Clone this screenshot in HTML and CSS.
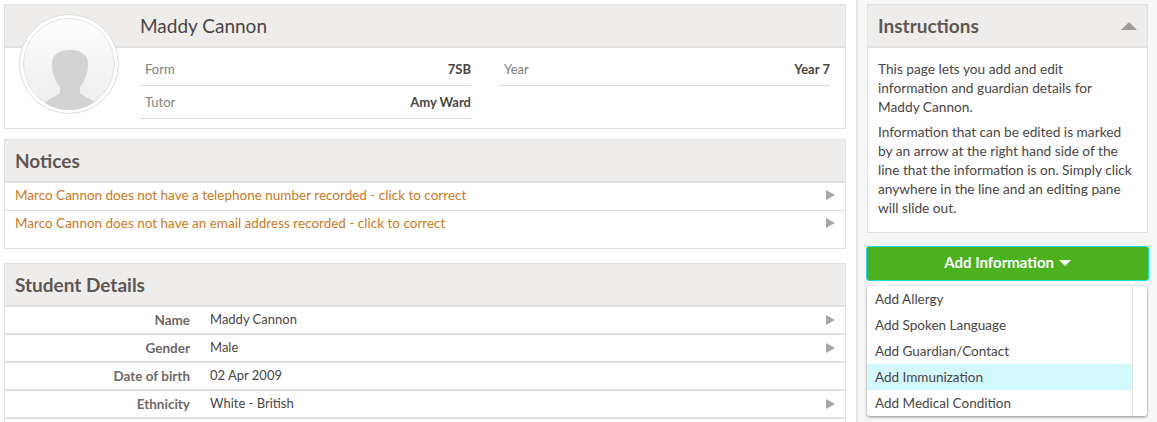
FILE: index.html
```html
<!DOCTYPE html>
<html lang="en">
<head>
    <meta charset="UTF-8">
    <meta name="viewport" content="width=device-width, initial-scale=1.0">
    <title>Maddy Cannon - Student Details</title>
    <link rel="stylesheet" href="styles.css">
</head>
<body>
    <div class="page">
        <div class="main">
            <div class="panel profile">
                <div class="avatar">
                    <svg viewBox="0 0 92 92" width="92" height="92">
                        <defs>
                            <linearGradient id="avatarBg" x1="0" y1="0" x2="0" y2="1">
                                <stop offset="0" stop-color="#fdfdfd"/>
                                <stop offset="1" stop-color="#ececec"/>
                            </linearGradient>
                        </defs>
                        <circle cx="46" cy="46" r="45.5" fill="url(#avatarBg)" stroke="#e2e2e2"/>
                        <path d="M47 32c-10 0-18 4-18 14 0 6 1 10 3 14 1 4 3 7 5 9v6c-3 3-8 5-10 6-4 2-7 5-8 11h56c-1-6-4-9-8-11-2-1-7-3-10-6v-6c2-2 4-5 5-9 2-4 3-8 3-14 0-10-8-14-18-14z" fill="#d2d2d2"/>
                    </svg>
                </div>
                <div class="profile-head">
                    <h1>Maddy Cannon</h1>
                </div>
                <div class="profile-info">
                    <div class="info-row"><span class="info-label">Form</span><span class="info-value">7SB</span></div>
                    <div class="info-row"><span class="info-label">Year</span><span class="info-value">Year 7</span></div>
                    <div class="info-row"><span class="info-label">Tutor</span><span class="info-value">Amy Ward</span></div>
                </div>
            </div>

            <div class="panel notices">
                <div class="panel-head"><h2>Notices</h2></div>
                <div class="notice-row"><span>Marco Cannon does not have a telephone number recorded - click to correct</span><i class="arrow"></i></div>
                <div class="notice-row notice-last"><span>Marco Cannon does not have an email address recorded - click to correct</span><i class="arrow"></i></div>
            </div>

            <div class="panel details">
                <div class="panel-head"><h2>Student Details</h2></div>
                <div class="detail-row"><span class="detail-label">Name</span><span class="detail-value">Maddy Cannon</span><i class="arrow"></i></div>
                <div class="detail-row"><span class="detail-label">Gender</span><span class="detail-value">Male</span><i class="arrow"></i></div>
                <div class="detail-row"><span class="detail-label">Date of birth</span><span class="detail-value">02 Apr 2009</span></div>
                <div class="detail-row"><span class="detail-label">Ethnicity</span><span class="detail-value">White - British</span><i class="arrow"></i></div>
            </div>
        </div>

        <div class="side">
            <div class="panel instructions">
                <div class="panel-head instructions-head">
                    <h2>Instructions</h2>
                    <i class="caret-up"></i>
                </div>
                <div class="instructions-body">
                    <p class="intro">This page lets you add and edit information and guardian details for Maddy Cannon.</p>
                    <p>Information that can be edited is marked by an arrow at the right hand side of the line that the information is on. Simply click anywhere in the line and an editing pane will slide out.</p>
                </div>
            </div>

            <button class="add-btn">Add Information <i class="caret-down"></i></button>
            <div class="menu">
                <ul>
                    <li>Add Allergy</li>
                    <li>Add Spoken Language</li>
                    <li>Add Guardian/Contact</li>
                    <li class="active">Add Immunization</li>
                    <li>Add Medical Condition</li>
                </ul>
                <div class="menu-track"></div>
            </div>
        </div>
    </div>
</body>
</html>
```

FILE: styles.css
```css
* { box-sizing: border-box; }
html, body { margin: 0; height: 422px; overflow: hidden; }
body { font-family: "Lato", "Noto Sans", sans-serif; font-size: 13px; color: #4a4543; background: #fff; }

.page { display: flex; height: 422px; }
.main { width: 856px; padding: 4px 10px 0 4px; flex-shrink: 0; }
.side { flex: 1; padding: 4px 8px 0 9px; background: #f7f7f7; border-left: 2px solid #e4e2e1; position: relative; }

.panel { border: 1px solid #e2e0df; background: #fff; }
.panel-head { height: 43px; background: #eeedeb; border-bottom: 2px solid #e2e0df; padding: 0 10px; display: flex; align-items: center; }
h2 { margin: 0; font-size: 19px; font-weight: 700; color: #5e5753; }

.profile { height: 125px; position: relative; }
.profile-head { height: 43px; background: #eeedeb; border-bottom: 2px solid #e2e0df; padding-left: 135px; display: flex; align-items: center; }
h1 { margin: 0; font-size: 19px; font-weight: 400; color: #4a4543; }
.avatar { position: absolute; left: 14px; top: 9px; width: 100px; height: 100px; padding: 3px; border-radius: 50%; background: #fff; border: 1px solid #dedcdb; z-index: 1; }
.avatar svg { display: block; border-radius: 50%; }

.profile-info { display: grid; grid-template-columns: 331px 331px; column-gap: 28px; padding: 5px 0 0 135px; }
.info-row { height: 33px; display: flex; justify-content: space-between; align-items: center; border-bottom: 1px solid #dedcdb; padding-left: 5px; }
.info-label { color: #85807c; }
.info-value { font-weight: 700; color: #4a4543; }

.notices { height: 110px; margin-top: 10px; }
.notice-row { height: 28px; display: flex; justify-content: space-between; align-items: center; padding: 0 10px 3px 10px; font-size: 13.5px; color: #cc7a1c; border-bottom: 1px solid #e2e0df; }
.notice-last { border-bottom: 0; padding-bottom: 4px; }

.details { margin-top: 14px; height: 159px; border-bottom: 0; }
.detail-row { height: 28px; display: flex; align-items: center; padding: 0 10px 0 0; border-bottom: 2px solid #e2e0df; }
.detail-label { width: 185px; text-align: right; font-size: 13.5px; font-weight: 700; color: #6f6864; }
.detail-value { margin-left: 20px; flex: 1; padding-bottom: 2px; }

.arrow { width: 0; height: 0; border-style: solid; border-width: 5px 0 5px 9px; border-color: transparent transparent transparent #aaa6a4; flex-shrink: 0; }

.instructions { width: 281px; height: 229px; }
.instructions-head { justify-content: space-between; padding-right: 10px; }
.caret-up { width: 0; height: 0; border-style: solid; border-width: 0 8px 8px 8px; border-color: transparent transparent #a09a97 transparent; }
.instructions-body { padding: 11px 10px 0 10px; font-size: 13.7px; line-height: 19px; }
.instructions-body p { margin: 0 0 6px 0; }
.instructions-body .intro { padding-right: 10px; }

.add-btn { display: block; width: 283px; height: 35px; margin: 13px 0 0 -1px; background: #4bb21e; border: 1px solid #14dfe8; border-radius: 3px; color: #fff; font-family: inherit; font-size: 15px; font-weight: 700; padding: 0 0 4px 0; }
.caret-down { display: inline-block; width: 0; height: 0; margin-left: 1px; vertical-align: 2px; border-style: solid; border-width: 6px 6px 0 6px; border-color: #fff transparent transparent transparent; }

.menu { position: absolute; left: 9px; top: 286px; width: 280px; height: 130px; display: flex; background: #fff; border-radius: 3px; box-shadow: 0 1px 3px rgba(0, 0, 0, 0.45); font-size: 13.5px; }
.menu::before { content: ""; position: absolute; left: 11px; top: -5px; width: 0; height: 0; border-style: solid; border-width: 0 5px 5px 5px; border-color: transparent transparent #fff transparent; }
.menu ul { list-style: none; margin: 0; padding: 0; flex: 1; }
.menu li { height: 26px; line-height: 26px; padding-left: 8px; }
.menu li.active { background: #d3f9fc; }
.menu-track { width: 15px; border-left: 1px solid #e4e2e1; }
```
